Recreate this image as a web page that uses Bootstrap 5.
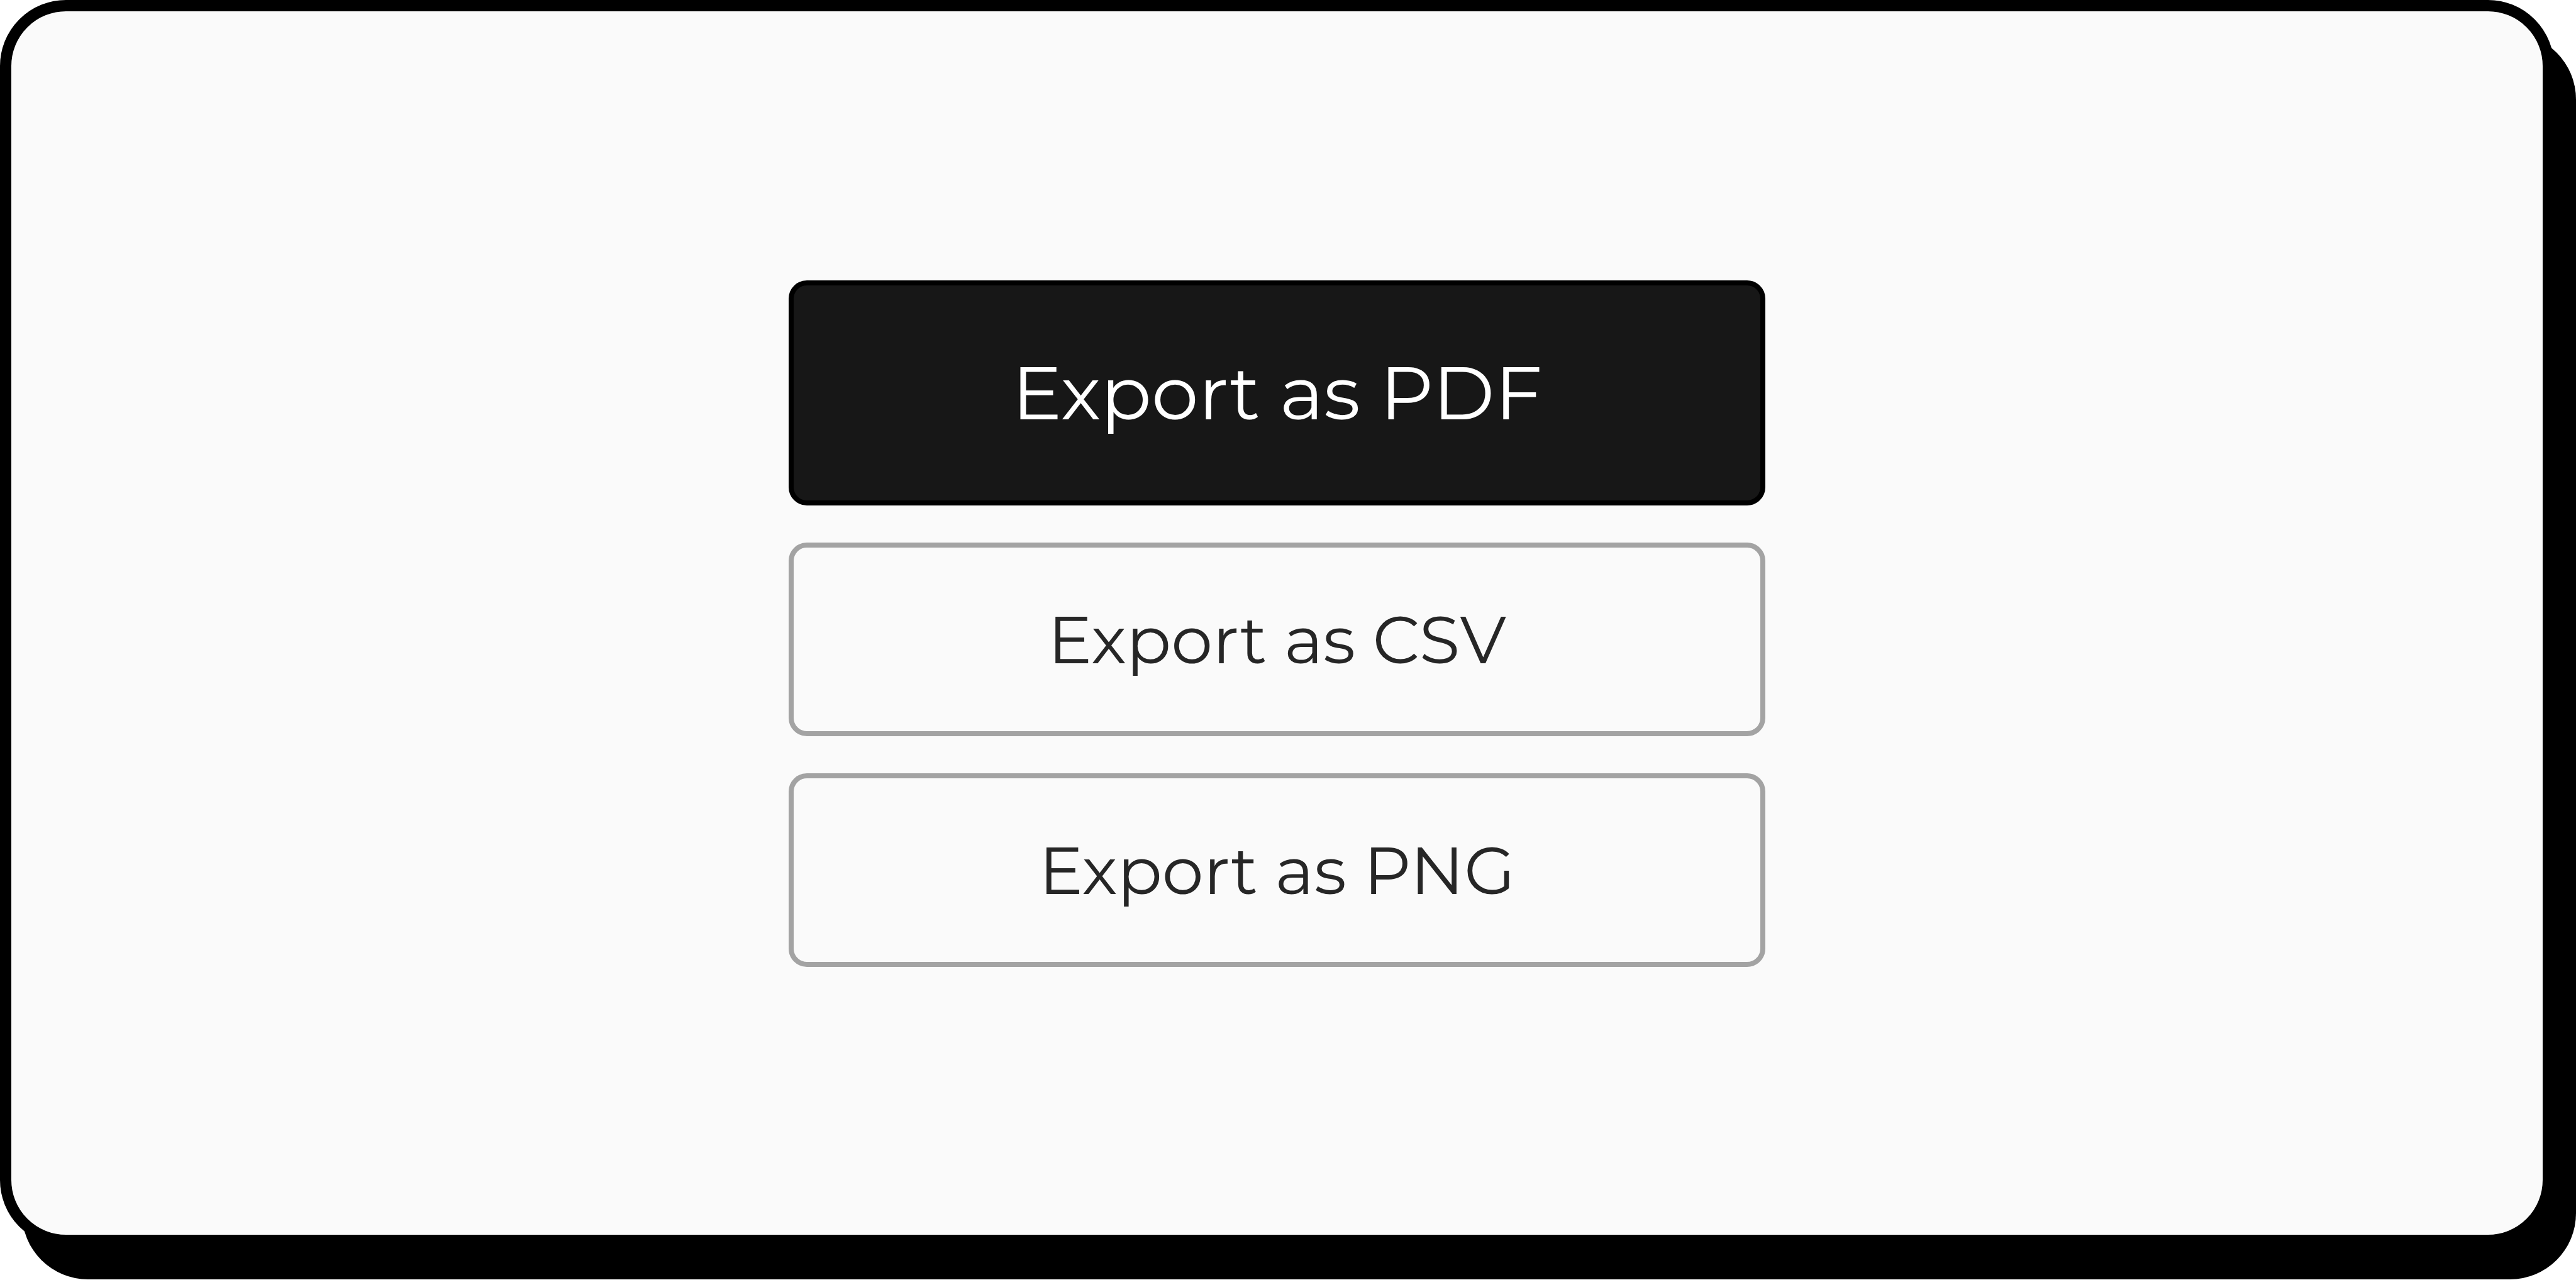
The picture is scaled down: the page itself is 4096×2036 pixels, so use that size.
<!DOCTYPE html>
<html lang="en">
<head>
<meta charset="utf-8">
<meta name="viewport" content="width=device-width, initial-scale=1">
<title>Export options</title>
<link href="https://cdn.jsdelivr.net/npm/bootstrap@5.3.0/dist/css/bootstrap.min.css" rel="stylesheet">
<style>
  body { background: #fff; font-family: Montserrat, Inter, sans-serif; }
  /* Room for the hard shadow on the right and below */
  .export-page { padding: 0 35px 54px 0; }
  .export-panel {
    background: #fafafa;
    border: 18px solid #000;
    border-radius: 105px;
    box-shadow: 35px 53px 0 #000;
    padding-top: 2px;
  }
  .export-stack { max-width: 1553px; gap: 59px; }
  .export-btn {
    --bs-btn-border-width: 8px;
    --bs-btn-border-radius: 29px;
    --bs-btn-padding-y: 84px;
    --bs-btn-font-size: 105px;
    --bs-btn-line-height: 124px;
    --bs-btn-color: #262626;
    --bs-btn-border-color: #a3a3a3;
    --bs-btn-hover-color: #262626;
    --bs-btn-hover-bg: #eee;
    --bs-btn-hover-border-color: #a3a3a3;
  }
  .export-btn-main {
    --bs-btn-padding-y: 98px;
    --bs-btn-font-size: 119px;
    --bs-btn-line-height: 146px;
    --bs-btn-color: #fff;
    --bs-btn-bg: #171717;
    --bs-btn-border-color: #000;
    --bs-btn-hover-color: #fff;
    --bs-btn-hover-bg: #262626;
    --bs-btn-hover-border-color: #000;
  }
</style>
</head>
<body>
<main class="export-page d-flex min-vh-100">
  <section class="export-panel flex-grow-1 d-flex align-items-center justify-content-center" aria-label="Export options">
    <div class="export-stack w-100 d-flex flex-column">
      <button type="button" class="btn export-btn export-btn-main">Export as PDF</button>
      <button type="button" class="btn export-btn">Export as CSV</button>
      <button type="button" class="btn export-btn">Export as PNG</button>
    </div>
  </section>
</main>
<script src="https://cdn.jsdelivr.net/npm/bootstrap@5.3.0/dist/js/bootstrap.bundle.min.js"></script>
</body>
</html>
